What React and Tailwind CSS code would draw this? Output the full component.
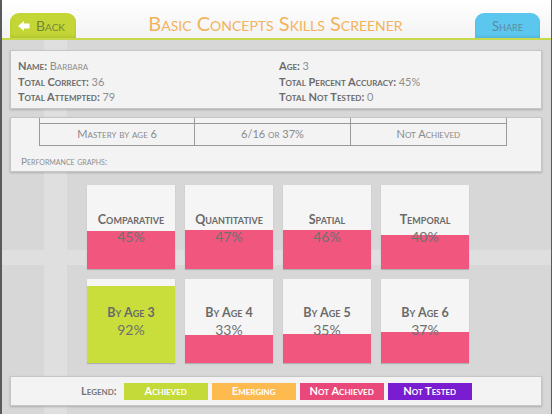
import React from "react";

const tiles1 = [
  { label: "Comparative", pct: 45, color: "bg-[#f1567e]" },
  { label: "Quantitative", pct: 47, color: "bg-[#f1567e]" },
  { label: "Spatial", pct: 46, color: "bg-[#f1567e]" },
  { label: "Temporal", pct: 40, color: "bg-[#f1567e]" },
];
const tiles2 = [
  { label: "By Age 3", pct: 92, color: "bg-[#c9de3a]" },
  { label: "By Age 4", pct: 33, color: "bg-[#f1567e]" },
  { label: "By Age 5", pct: 35, color: "bg-[#f1567e]" },
  { label: "By Age 6", pct: 37, color: "bg-[#f1567e]" },
];

function Tile({ t, row }) {
  return (
    <div className="relative w-[88px] h-[84px] bg-[#f5f5f5] shadow-[0_1px_1px_rgba(0,0,0,0.18)] overflow-hidden">
      <div
        className={`absolute left-0 right-0 bottom-0 ${t.color}`}
        style={{ height: `${t.pct}%` }}
      />
      <div className={`relative flex flex-col items-center ${row === 1 ? "pt-[26px]" : "pt-[25px]"}`}>
        <div className="text-[12.5px] leading-[18px] font-bold text-[#6a6a6a] [font-variant:small-caps] whitespace-nowrap">
          {t.label}
        </div>
        <div className="text-[14px] leading-[16px] text-[#707070]">{t.pct}%</div>
      </div>
    </div>
  );
}

function Info({ label, value }) {
  return (
    <div className="text-[11px] leading-[15.7px] [font-variant:small-caps] whitespace-nowrap">
      <span className="font-bold text-[#6b6b6b]">{label}: </span>
      <span className="text-[#8e8e8e]">{value}</span>
    </div>
  );
}

export default function App() {
  return (
    <div
      className="relative w-[552px] h-[414px] overflow-hidden bg-[#d7d7d7] border-l-2 border-r border-[#5a5a5a] bg-[linear-gradient(90deg,transparent_42px,#dfdfdf_42px,#dfdfdf_65px,transparent_65px),linear-gradient(180deg,transparent_250px,#dfdfdf_250px,#dfdfdf_265px,transparent_265px)]"
      style={{ fontFamily: "Lato, 'Open Sans', sans-serif" }}
    >
      {/* Header */}
      <div className="h-[40px] flex items-end pl-[8px] pr-[11px] bg-[linear-gradient(180deg,#ffffff,#f3f3f3)] border-b-2 border-[#c6d94a]">
        <div className="w-[66px] h-[25px] rounded-t-[9px] bg-[#c3d635] flex items-center pl-[8px] gap-[6px] shadow-[inset_0_-2px_3px_rgba(0,0,0,0.08)]">
          <svg width="12" height="10" viewBox="0 0 12 10">
            <polygon points="0,5 6,0 6,2.6 11.5,2.6 11.5,7.4 6,7.4 6,10" fill="#ffffff" />
          </svg>
          <span className="text-[14px] text-[#77843a] [font-variant:small-caps] leading-none mt-[1px]">Back</span>
        </div>
        <div className="flex-1 self-start mt-[10px] text-center text-[20px] leading-[26px] text-[#f2b35c] [font-variant:small-caps] whitespace-nowrap">
          Basic Concepts Skills Screener
        </div>
        <div className="w-[65px] h-[25px] rounded-t-[9px] bg-[#5cc7ee] flex items-center justify-center shadow-[inset_0_-2px_3px_rgba(0,0,0,0.08)]">
          <span className="text-[13px] text-[#5c8ba2] [font-variant:small-caps] leading-none mt-[2px]">Share</span>
        </div>
      </div>

      {/* Body */}
      <div className="flex flex-col pl-[8px] pr-[9px]">
        {/* Info panel */}
        <div className="mt-[10px] h-[59px] bg-[#f3f3f3] border border-[#c6c6c6] shadow-[0_1px_2px_rgba(0,0,0,0.2)] grid grid-cols-[261px_1fr] pl-[7px] pt-[7px]">
          <div>
            <Info label="Name" value="Barbara" />
            <Info label="Total Correct" value="36" />
            <Info label="Total Attempted" value="79" />
          </div>
          <div>
            <Info label="Age" value="3" />
            <Info label="Total Percent Accuracy" value="45%" />
            <Info label="Total Not Tested" value="0" />
          </div>
        </div>

        {/* Mastery panel */}
        <div className="mt-[8px] h-[55px] bg-[#f3f3f3] border border-[#c6c6c6] shadow-[0_1px_2px_rgba(0,0,0,0.2)] flex flex-col">
          <div className="ml-[28px] w-[468px] grid grid-cols-3 border-l border-r border-[#9a9a9a]">
            <div className="h-[5px] border-r border-[#9a9a9a]" />
            <div className="h-[5px] border-r border-[#9a9a9a]" />
            <div className="h-[5px]" />
          </div>
          <div className="ml-[28px] w-[468px] h-[23px] grid grid-cols-3 border border-[#9a9a9a] text-[11px] text-[#8a8a8a] [font-variant:small-caps]">
            <div className="flex items-center justify-center border-r border-[#9a9a9a]">Mastery by age 6</div>
            <div className="flex items-center justify-center border-r border-[#9a9a9a]">6/16 or 37%</div>
            <div className="flex items-center justify-center">Not Achieved</div>
          </div>
          <div className="pl-[10px] mt-[9px] text-[10px] leading-[12px] text-[#8e8e8e] [font-variant:small-caps]">
            Performance graphs:
          </div>
        </div>

        {/* Tiles */}
        <div className="mt-[13px] ml-[77px] grid grid-cols-[repeat(4,88px)] gap-[10px]">
          {tiles1.map((t) => (
            <Tile key={t.label} t={t} row={1} />
          ))}
          {tiles2.map((t) => (
            <Tile key={t.label} t={t} row={2} />
          ))}
        </div>

        {/* Legend */}
        <div className="mt-[13px] h-[30px] bg-[#f3f3f3] border border-[#c6c6c6] shadow-[0_1px_2px_rgba(0,0,0,0.2)] flex items-center pl-[70px]">
          <span className="text-[11px] font-bold text-[#777] [font-variant:small-caps] mr-[7px]">Legend:</span>
          <div className="flex gap-[4px]">
            <div className="w-[84px] h-[17px] bg-[#c4da38] flex items-center justify-center text-[11px] font-bold text-white [font-variant:small-caps]">Achieved</div>
            <div className="w-[84px] h-[17px] bg-[#fdbb4f] flex items-center justify-center text-[11px] font-bold text-white [font-variant:small-caps]">Emerging</div>
            <div className="w-[84px] h-[17px] bg-[#e8497a] flex items-center justify-center text-[11px] font-bold text-white [font-variant:small-caps]">Not Achieved</div>
            <div className="w-[84px] h-[17px] bg-[#7a1ccf] flex items-center justify-center text-[11px] font-bold text-white [font-variant:small-caps]">Not Tested</div>
          </div>
        </div>
      </div>
    </div>
  );
}
